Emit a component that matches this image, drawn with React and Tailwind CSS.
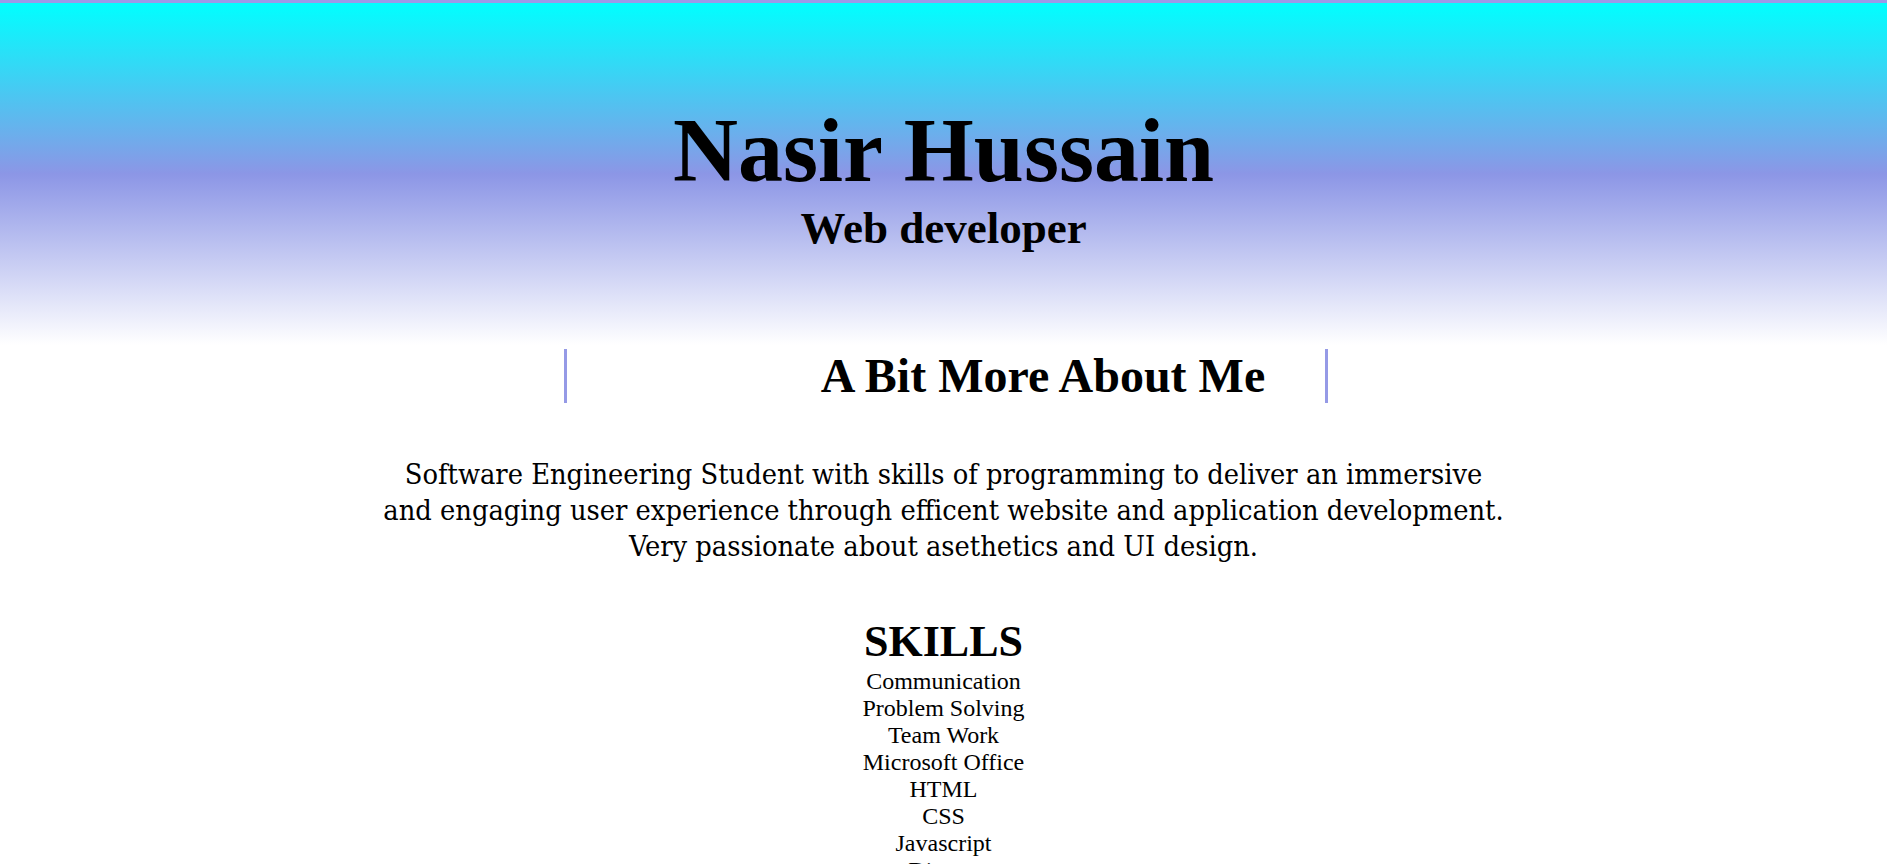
const skills = [
  'Communication',
  'Problem Solving',
  'Team Work',
  'Microsoft Office',
  'HTML',
  'CSS',
  'Javascript',
  'Django',
];

const App = () => {
  return (
    <div className="min-h-screen bg-white text-black font-['Liberation_Serif','Times_New_Roman',serif]">
      {/* Header */}
      <header className="border-t-[3px] border-[#9a9ae8] h-[345px] bg-linear-to-b/srgb from-[#00ffff] via-[#8c96e6] to-white text-center pt-[96px]">
        <h1 className="text-[90px] leading-[103px] font-bold">Nasir Hussain</h1>
        <p className="mt-[1px] text-[45px] leading-[51px] font-bold">Web developer</p>
      </header>

      {/* About */}
      <section className="mt-[4px]">
        <div className="flex justify-center pl-[4px]">
          <div className="w-[764px] border-x-[3px] border-[#959ae6] h-[54px] text-center pl-[195px]">
            <h2 className="text-[48px] leading-[54px] font-bold">A Bit More About Me</h2>
          </div>
        </div>
        <p className="mt-[53px] text-center text-[28.7px] leading-[36px] font-['DejaVu_Serif',Georgia,serif] [font-stretch:condensed]">
          Software Engineering Student with skills of programming to deliver an immersive
          <br />
          and engaging user experience through efficent website and application development.
          <br />
          Very passionate about asethetics and UI design.
        </p>
      </section>

      {/* Skills */}
      <section className="mt-[52px] text-center">
        <h3 className="text-[44px] leading-[52px] font-bold">SKILLS</h3>
        <ul>
          {skills.map((s) => (
            <li key={s} className="text-[24px] leading-[27px]">{s}</li>
          ))}
        </ul>
      </section>
    </div>
  );
};

export default App;
